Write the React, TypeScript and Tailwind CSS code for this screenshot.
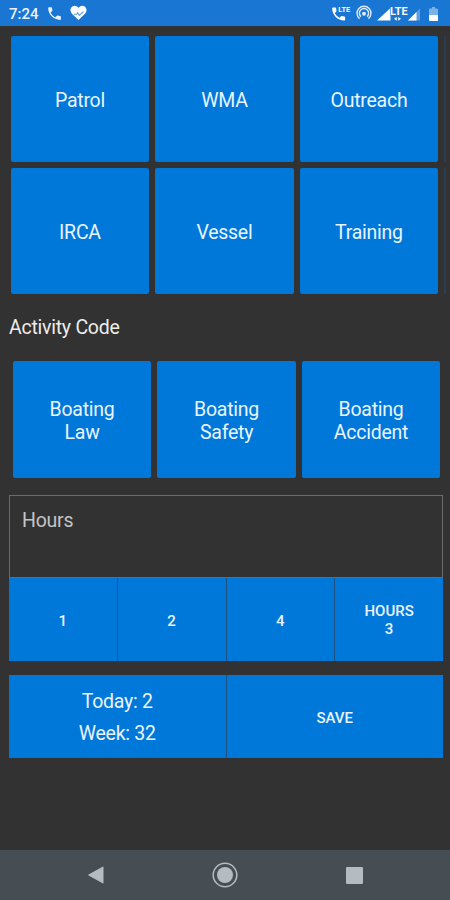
import { ReactNode } from "react";
import clsx from "clsx";

const programs = [
    ['Patrol', 'WMA', 'Outreach'],
    ['IRCA', 'Vessel', 'Training'],
];

const activityCodes = ['Boating Law', 'Boating Safety', 'Boating Accident'];

const hourOptions = ['1', '2', '4'];

const StatusBar = () => {
    return (
        <header className="flex h-[26px] items-center bg-[#1976d2] text-[#eaf3fd]">
            <span className="mt-[2px] ml-[9px] w-[30px] text-[15px] leading-[26px] font-medium whitespace-nowrap">7:24</span>
            <svg className="mt-[1px] ml-[7px] h-[17px] w-[17px]" viewBox="0 0 24 24" fill="#e8f1fb">
                <path d="M6.62 10.79c1.44 2.83 3.76 5.14 6.59 6.59l2.2-2.2c.27-.27.67-.36 1.02-.24 1.12.37 2.33.57 3.57.57.55 0 1 .45 1 1V20c0 .55-.45 1-1 1C10.61 21 3 13.39 3 4c0-.55.45-1 1-1h3.5c.55 0 1 .45 1 1 0 1.25.2 2.45.57 3.57.11.35.03.74-.25 1.02l-2.2 2.2z" />
            </svg>
            <svg className="ml-[7px] h-[16px] w-[17px]" viewBox="0 0 17 16">
                <path d="M8.5 15 2.2 9C-.3 6.4.1 2.8 2.4 1.4c2-1.2 4.6-.7 6.1 1.4 1.5-2.1 4.1-2.6 6.1-1.4 2.3 1.4 2.7 5 .2 7.6z" fill="#fff" />
                <path d="M4 9.3h2.6l1.2-1.5 1.5 2.6 1.5-1.5 2.700-2.100" fill="none" stroke="#5b9bde" strokeWidth="1.1" />
            </svg>
            <div className="flex-1" />
            {/* call over LTE */}
            <svg className="h-[18px] w-[19px]" viewBox="0 0 19 18" fill="#fff">
                <path transform="translate(-2 1.3) scale(.72)" d="M6.62 10.79c1.44 2.83 3.76 5.14 6.59 6.59l2.2-2.2c.27-.27.67-.36 1.02-.24 1.12.37 2.33.57 3.57.57.55 0 1 .45 1 1V20c0 .55-.45 1-1 1C10.61 21 3 13.39 3 4c0-.55.45-1 1-1h3.5c.55 0 1 .45 1 1 0 1.25.2 2.45.57 3.57.11.35.03.74-.25 1.02l-2.2 2.2z" />
                <text x="6.3" y="7.7" fontSize="7.5" fontWeight="700" textLength="12" lengthAdjust="spacingAndGlyphs">LTE</text>
            </svg>
            {/* hotspot */}
            <svg className="ml-[5px] h-[16px] w-[16px]" viewBox="0 0 16 16" fill="none" stroke="#dceafa" strokeWidth="1.4">
                <path d="M3.6 13.7a7 7 0 1 1 8.8 0" />
                <path d="M5 11.6a4.6 4.6 0 1 1 6 0" />
                <circle cx="8" cy="8.7" r="2" fill="#dceafa" stroke="none" />
            </svg>
            {/* both SIM signals, the first with its data label */}
            <svg className="mt-[1px] ml-[5px] h-[16px] w-[46px]" viewBox="0 0 46 16">
                <path d="M0 14.5 13.5 2v12.5z" fill="#fff" />
                <text x="13" y="8.8" fontSize="10.5" fontWeight="700" fill="#fff" stroke="#1976d2" strokeWidth="1.2" paintOrder="stroke" textLength="17.5" lengthAdjust="spacingAndGlyphs">LTE</text>
                <path d="m17 12.800 2.800-1.900v3.800zM24 12.800l-2.800-1.900v3.800z" fill="#fff" />
                <path d="M31 14.5 43 2.5v12z" fill="#5d9edf" />
                <path d="M31 14.5 39.5 6v8.5z" fill="#fff" />
            </svg>
            <svg className="mt-[1px] mr-[12px] ml-[6px] h-[14px] w-[9px]" viewBox="0 0 9 14">
                <path d="M3 0h3v1.500h2a1 1 0 0 1 1 1V13a1 1 0 0 1-1 1H1a1 1 0 0 1-1-1V2.500a1 1 0 0 1 1-1h2z" fill="#7eb2e6" />
                <path d="M0 8h9v5a1 1 0 0 1-1 1H1a1 1 0 0 1-1-1z" fill="#fff" />
            </svg>
        </header>
    );
};

const Tile = ({ label, small }: { label: string; small?: boolean }) => (
    <button className={clsx(
        "flex w-[138.5px] shrink-0 items-center justify-center rounded-[2px] bg-[#0078d9] px-7 pt-[5px] text-[19.5px] leading-[22.5px] tracking-[-0.25px] text-[#eaf4ff]",
        small ? "h-[116.5px]" : "h-[126px]"
    )}>
        {label}
    </button>
);

const ActionButton = ({ children, className }: { children: ReactNode; className?: string }) => (
    <button className={clsx("flex flex-1 flex-col items-center justify-center bg-[#0078d9] text-[#eaf4ff]", className)}>
        {children}
    </button>
);

const NavBar = () => (
    <nav className="flex h-[50px] items-center justify-between bg-[#464e53] px-[87px]">
        <svg className="h-[18px] w-[17px]" viewBox="0 0 17 18" fill="#b4bcc0">
            <path d="M16.5 1.200v15.600a.6.6 0 0 1-.9.500L1.500 9.500a.6.6 0 0 1 0-1L15.600.7a.6.6 0 0 1 .9.500z" />
        </svg>
        <svg className="h-[26px] w-[26px]" viewBox="0 0 26 26">
            <circle cx="13" cy="13" r="11.8" fill="none" stroke="#b4bcc0" strokeWidth="1.5" />
            <circle cx="13" cy="13" r="8" fill="#b4bcc0" />
        </svg>
        <div className="h-[17px] w-[17px] rounded-[1px] bg-[#b4bcc0]" />
    </nav>
);

const App = () => {
    return (
        <div className="flex h-[900px] w-[450px] flex-col overflow-hidden bg-[#323232] font-[Roboto,sans-serif]">
            <StatusBar />
            <main className="flex-1">
                <div className="mt-[10px] flex flex-col gap-[6px] pl-[10.7px]">
                    {programs.map((row) => (
                        <div key={row[0]} className="flex gap-[6px]">
                            {row.map((label) => <Tile key={label} label={label} />)}
                            {/* edge of the next page of tiles */}
                            <div className="w-[2px] bg-[#2b3c54]" />
                        </div>
                    ))}
                </div>
                <h2 className="mt-[23px] ml-[9px] text-[19.5px] leading-[22px] tracking-[-0.25px] text-[#ededed]">Activity Code</h2>
                <div className="mt-[22px] flex gap-[6px] pl-[12.8px]">
                    {activityCodes.map((label) => <Tile key={label} label={label} small />)}
                </div>
                <div className="mt-[17px] mr-[7px] ml-[9px]">
                    <div className="h-[83px] border border-[#6b6b6b] px-[12px] pt-[14px] text-[19.5px] leading-[22px] tracking-[-0.25px] text-[#c4c4c4]">Hours</div>
                    <div className="flex h-[83.5px] gap-px bg-[#1f507f] text-[15px] leading-[18px] font-medium">
                        {hourOptions.map((h) => <ActionButton key={h} className="pt-[3px]">{h}</ActionButton>)}
                        <ActionButton className="pt-[2px]">
                            <span>HOURS</span>
                            <span>3</span>
                        </ActionButton>
                    </div>
                    <div className="mt-[14px] flex h-[83px] gap-px bg-[#1f507f]">
                        <ActionButton className="pt-[2px] text-[19.5px] leading-[32px] tracking-[-0.25px]">
                            <span>Today: 2</span>
                            <span>Week: 32</span>
                        </ActionButton>
                        <ActionButton className="pt-[3px] text-[15px] font-medium">SAVE</ActionButton>
                    </div>
                </div>
            </main>
            <NavBar />
        </div>
    );
};

export default App;
